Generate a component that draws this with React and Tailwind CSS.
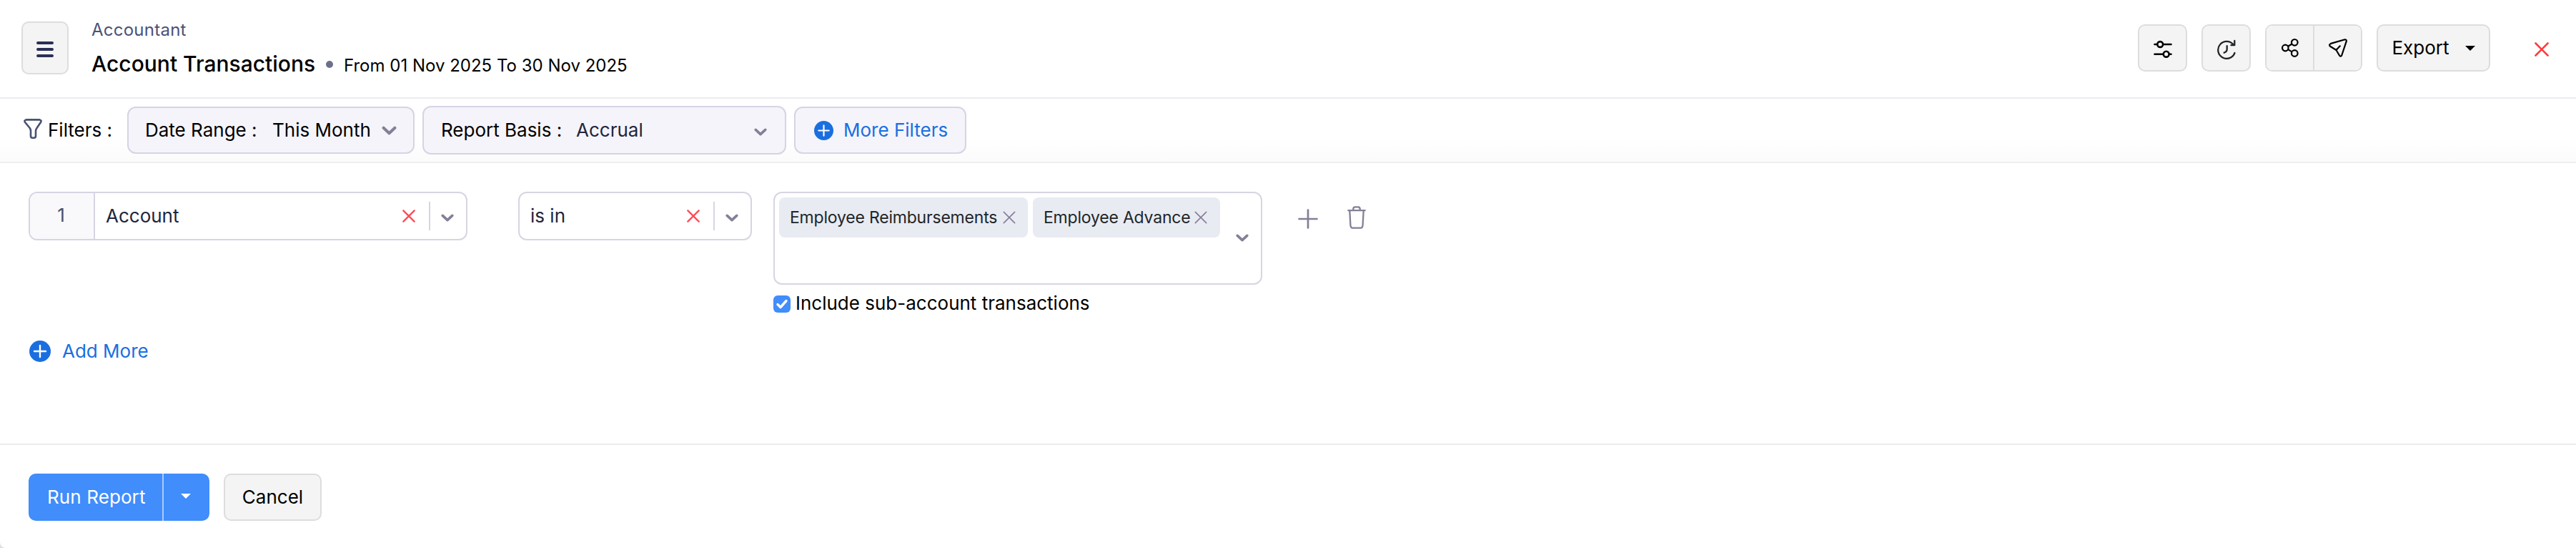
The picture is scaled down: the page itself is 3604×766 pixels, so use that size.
import React from "react";

function Chevron({ className }) {
    return (
        <svg viewBox="0 0 20 12" fill="none" stroke="currentColor" strokeWidth="4" strokeLinecap="round" strokeLinejoin="round" className={className}>
            <path d="M2.5 2.5 10 9.5l7.5-7" />
        </svg>
    );
}

function Cross({ className, strokeWidth = 2.6 }) {
    return (
        <svg viewBox="0 0 20 20" fill="none" stroke="currentColor" strokeWidth={strokeWidth} strokeLinecap="round" className={className}>
            <path d="M1.5 1.5l17 17M18.5 1.5l-17 17" />
        </svg>
    );
}

function PlusCircle({ size }) {
    return (
        <svg width={size} height={size} viewBox="0 0 30 30" className="shrink-0 text-[#1a6fe0]">
            <circle cx="15" cy="15" r="15" fill="currentColor" />
            <path d="M15 7v16M7 15h16" stroke="#fff" strokeWidth="2.4" strokeLinecap="round" />
        </svg>
    );
}

function Caret({ className }) {
    return (
        <svg width="14" height="7" viewBox="0 0 14 7" className={className}>
            <path d="M0 0h14L7 7z" fill="currentColor" />
        </svg>
    );
}

function Chip({ label, className, textClass }) {
    return (
        <div className={`flex h-14 items-center rounded-lg bg-[#e8ebf2] pl-[15px] ${className}`}>
            <span className={`shrink-0 whitespace-nowrap text-[23px] tracking-[-0.2px] text-[#212529] ${textClass}`}>{label}</span>
            <Cross className="ml-[7px] size-[18px] shrink-0 text-[#857f98]" strokeWidth={1.8} />
        </div>
    );
}

function SelectBox({ value, className, children }) {
    return (
        <div className={`flex h-[68px] items-center overflow-hidden rounded-xl border-2 border-[#d7d5e2] ${className}`}>
            {children}
            <span className="flex-1 pb-px pl-[15px] text-[26px] text-[#21263c]">{value}</span>
            <Cross className="size-[18px] text-[#ff4d55]" />
            <div className="ml-[19px] h-10 w-0.5 bg-[#d7d5e2]" />
            <Chevron className="ml-[15px] mr-[17px] mt-1 h-[11px] w-[18px] text-[#857f98]" />
        </div>
    );
}

function Header() {
    const btn = "flex items-center justify-center bg-[#f4f4f4] text-black";
    return (
        <header className="flex h-[138px] border-b-2 border-[#ebeaf0] pl-[30px]">
            <button className={`${btn} mt-[30px] h-[74px] w-[66px] rounded-[10px] border-2 border-[#dddddd]`}>
                <svg width="24" height="22" viewBox="0 0 24 22" stroke="#2b2f56" strokeWidth="4" strokeLinecap="round" className="mt-1">
                    <path d="M2 2h20M2 11h20M2 20h20" />
                </svg>
            </button>
            <div className="ml-8 flex-1 pt-[26px]">
                <p className="text-2xl leading-8 tracking-[0.25px] text-[#4b5277]">Accountant</p>
                <div className="mt-[11px] flex h-10 items-center">
                    <h1 className="w-[328px] whitespace-nowrap text-[30px] font-medium leading-10">Account Transactions</h1>
                    <span className="mt-0.5 size-[10px] rounded-full bg-[#6c718a]" />
                    <span className="ml-[15px] whitespace-nowrap pt-1.5 text-2xl">From 01 Nov 2025 To 30 Nov 2025</span>
                </div>
            </div>
            <div className="mt-[34px] flex h-[66px] pr-[38px]">
                <button className={`${btn} w-[69px] rounded-[10px] border-2 border-[#dddddd]`}>
                    <svg width="26" height="26" viewBox="0 0 26 26" fill="none" stroke="currentColor" strokeWidth="2.6" strokeLinecap="round" className="mt-1">
                        <path d="M1.500 6H5M13.500 6h11M1.500 19.700h12M22 19.700h2.500" />
                        <circle cx="9.2" cy="6" r="3.900" />
                        <circle cx="17.700" cy="19.700" r="3.900" />
                    </svg>
                </button>
                <button className={`${btn} ml-5 w-[69px] rounded-[10px] border-2 border-[#dddddd]`}>
                    <svg width="26" height="28" viewBox="0 0 26 28" fill="none" stroke="#212529" strokeWidth="2.3" strokeLinecap="round" strokeLinejoin="round" className="mt-[3px]">
                        <path d="M24.500 19A12 12 0 1 1 22.500 7.300" />
                        <path d="M24.300 2v6.200H19.500" />
                        <path d="M13.700 9.200v4.300q0 4-4 5.200" />
                    </svg>
                </button>
                <div className="ml-5 flex w-[136px] overflow-hidden rounded-[10px] border-2 border-[#dddddd]">
                    <button className={`${btn} w-[67px] border-r-2 border-[#dddddd]`}>
                        <svg width="26" height="28" viewBox="0 0 26 28" fill="none" stroke="currentColor" strokeWidth="2.2">
                            <circle cx="6.300" cy="14" r="4.300" />
                            <circle cx="19.300" cy="6.300" r="4.300" />
                            <circle cx="19.300" cy="21.500" r="4.300" />
                            <path d="M10 11.800l5.600-3.300M10 16.100l5.600 3.300" />
                        </svg>
                    </button>
                    <button className={`${btn} flex-1`}>
                        <svg width="26" height="26" viewBox="0 0 26 26" fill="none" stroke="currentColor" strokeWidth="2.2" strokeLinecap="round" strokeLinejoin="round">
                            <path d="M22.500 1.300 3 6.900Q.2 8.200 1.700 10.500L10.500 16l4.700 7.800q1.700 1.900 3-.3L24.800 3.700Q25 .9 22.500 1.300zM10.500 16l5.300-5.700" />
                        </svg>
                    </button>
                </div>
                <button className={`${btn} ml-5 w-[159px] rounded-[10px] border-2 border-[#dddddd]`}>
                    <span className="pb-px text-[26px]">Export</span>
                    <Caret className="ml-[22px]" />
                </button>
                <Cross className="ml-[62px] mt-[25px] size-5 text-[#ff3b3b]" />
            </div>
        </header>
    );
}

function FilterBar() {
    const box = "flex items-center rounded-xl border-2 border-[#d4d5e4] bg-[#f5f4fa]";
    return (
        <div className="flex h-[90px] items-center border-b-2 border-[#efeff2] bg-gradient-to-b from-white from-60% to-[#fbfbfc] pl-[33px] text-[26px]">
            <svg width="26" height="28" viewBox="0 0 26 28" fill="none" stroke="#485273" strokeWidth="2.6" strokeLinejoin="round" className="mb-1">
                <path d="M3.500 1.400h19q3 .6 1.600 3.300l-5.600 8.300q-1.500 2-1.500 4.500v7q-.3 2.200-2.500 2.200h-2q-2.500-.2-2.500-2.500V17q0-2-1.300-4L1.900 4.700Q.6 2 3.500 1.400z" />
            </svg>
            <span className="ml-2 w-[111px] whitespace-nowrap pb-0.5">Filters :</span>
            <div className={`${box} h-[66px] w-[402px] whitespace-nowrap pl-[23px]`}>
                <span className="w-[178px] pb-0.5">Date Range :</span>
                <span className="w-[153px] pb-0.5">This Month</span>
                <Chevron className="h-[13px] w-[21px] text-[#857f98]" />
            </div>
            <div className={`${box} ml-[11px] h-[68px] w-[509px] whitespace-nowrap pl-6`}>
                <span className="w-[189px] pb-0.5">Report Basis :</span>
                <span className="w-[249px] pb-0.5 text-[#21263c]">Accrual</span>
                <Chevron className="mt-1 h-[11px] w-[18px] text-[#857f98]" />
            </div>
            <button className={`${box} ml-[11px] h-[66px] w-[241px] whitespace-nowrap pl-[26px] text-[#1a6fe0]`}>
                <PlusCircle size={27} />
                <span className="ml-[14px] pb-0.5">More Filters</span>
            </button>
        </div>
    );
}

export default function App() {
    return (
        <div className="h-[766px] w-[3604px] bg-[#dfdfe6] font-['Inter',sans-serif] text-black">
            <div className="flex h-full flex-col overflow-hidden rounded-bl-lg bg-white">
                <Header />
                <FilterBar />
                <main className="h-[394px] border-b-2 border-[#ececee] pl-10 pt-10">
                    <div className="flex h-[170px] items-start">
                        <SelectBox value="Account" className="w-[614px]">
                            <div className="flex h-full w-[91px] items-center justify-center border-r-2 border-[#d7d5e2] bg-[#f9f9fc] pb-[3px] pr-0.5 text-[26px] text-[#485273]">1</div>
                        </SelectBox>
                        <SelectBox value="is in" className="ml-[71px] w-[327px]" />
                        <div className="ml-[30px] w-[684px]">
                            <div className="flex h-[130px] rounded-xl border-2 border-[#d7d5e2] pl-1.5 pt-1.5">
                                <Chip label="Employee Reimbursements" className="w-[348px]" textClass="w-[291px]" />
                                <Chip label="Employee Advance" className="ml-[7px] w-[262px]" textClass="w-[204px]" />
                                <Chevron className="ml-[22px] mt-[51px] h-[11px] w-[18px] text-[#857f98]" />
                            </div>
                            <label className="mt-[10px] flex items-center">
                                <svg width="24" height="24" viewBox="0 0 24 24" fill="none" className="mt-0.5">
                                    <rect width="24" height="24" rx="6" fill="#408dfb" />
                                    <path d="M6 12.500l4 4 8-9" stroke="#fff" strokeWidth="3.400" strokeLinecap="round" strokeLinejoin="round" />
                                </svg>
                                <span className="ml-[7px] whitespace-nowrap text-[26px] leading-8">Include sub-account transactions</span>
                            </label>
                        </div>
                        <svg width="28" height="28" viewBox="0 0 28 28" stroke="#857f98" strokeWidth="2.700" strokeLinecap="round" className="ml-[50px] mt-6">
                            <path d="M14 1.500v25M1.500 14h25" />
                        </svg>
                        <svg width="26" height="32" viewBox="0 0 26 32" fill="none" stroke="#857f98" strokeWidth="2.300" strokeLinecap="round" strokeLinejoin="round" className="ml-[41px] mt-5">
                            <path d="M1.300 6.200h23.400M8.300 6V4q0-2.700 2.700-2.700h4q2.700 0 2.700 2.700v2M3.300 6.500l1.100 20.300q.3 3.900 3.800 3.900h9.600q3.500 0 3.800-3.900L22.700 6.500" />
                        </svg>
                    </div>
                    <button className="ml-px mt-[33px] flex items-center text-[26px] text-[#1a6fe0]">
                        <PlusCircle size={30} />
                        <span className="ml-4 pb-px">Add More</span>
                    </button>
                </main>
                <footer className="flex pl-10 pt-10 text-[26px]">
                    <div className="flex h-[66px] w-[253px] overflow-hidden rounded-[10px] bg-[#408dfb] text-white">
                        <button className="w-[187px] whitespace-nowrap pb-0.5 pl-[26px] text-left tracking-[0.1px]">Run Report</button>
                        <div className="h-full w-0.5 bg-[#a9cbfd]" />
                        <button className="flex flex-1 items-center justify-center">
                            <Caret className="mb-1 mr-0.5" />
                        </button>
                    </div>
                    <button className="ml-5 h-[66px] w-[137px] rounded-[10px] border-2 border-[#dddddd] bg-[#f4f4f4] pb-0.5">Cancel</button>
                </footer>
            </div>
        </div>
    );
}
